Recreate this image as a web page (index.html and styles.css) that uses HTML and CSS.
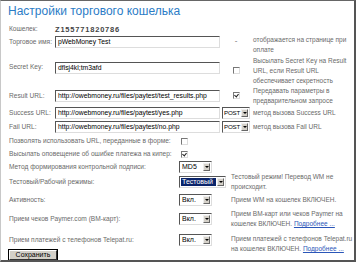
FILE: index.html
```html
<!DOCTYPE html>
<html lang="ru">
<head>
  <meta charset="UTF-8" />
  <title>Настройки торгового кошелька</title>
  <link rel="stylesheet" href="styles.css">
</head>
<body>
<div class="frame">
  <h1>Настройки торгового кошелька</h1>

  <div class="top-grid">
    <div class="lbl">Кошелек:</div>
    <div class="purse">Z155771820786</div>
    <div></div>
    <div></div>

    <div class="lbl t-name">Торговое имя:</div>
    <div class="t-name"><span class="field">pWebMoney Test</span></div>
    <div class="mid t-name">-</div>
    <div class="desc t-top">отображается на странице при<br>оплате</div>

    <div class="lbl t-key">Secret Key:</div>
    <div class="t-key"><span class="field">dflsj4kl;tm3afd</span></div>
    <div class="mid"><span class="cb"></span></div>
    <div class="desc">Высылать Secret Key на Result<br>URL, если Result URL<br>обеспечивает секретность</div>

    <div class="lbl">Result URL:</div>
    <div><span class="field">http://owebmoney.ru/files/paytest/test_results.php</span></div>
    <div class="mid"><span class="cb on"></span></div>
    <div class="desc">Передавать параметры в<br>предварительном запросе</div>

    <div class="lbl">Success URL:</div>
    <div><span class="field">http://owebmoney.ru/files/paytest/yes.php</span></div>
    <div class="mid-sel"><span class="sel w-post"><span class="sel-val">POST</span><span class="sel-btn"></span></span></div>
    <div class="desc">метод вызова Success URL</div>

    <div class="lbl">Fail URL:</div>
    <div><span class="field">http://owebmoney.ru/files/paytest/no.php</span></div>
    <div class="mid-sel"><span class="sel w-post"><span class="sel-val">POST</span><span class="sel-btn"></span></span></div>
    <div class="desc">метод вызова Fail URL</div>
  </div>

  <div class="bottom-grid">
    <div class="lbl">Позволять использовать URL, переданные в форме:</div>
    <div class="ctrl-cb"><span class="cb"></span></div>
    <div></div>

    <div class="lbl">Высылать оповещение об ошибке платежа на кипер:</div>
    <div class="ctrl-cb"><span class="cb on"></span></div>
    <div></div>

    <div class="lbl">Метод формирования контрольной подписи:</div>
    <div><span class="sel w-short"><span class="sel-val">MD5</span><span class="sel-btn"></span></span></div>
    <div></div>

    <div class="lbl">Тестовый/Рабочий режимы:</div>
    <div><span class="sel w-mode"><span class="sel-val picked">Тестовый</span><span class="sel-btn"></span></span></div>
    <div class="desc">Тестовый режим! Перевод WM не<br>происходит.</div>

    <div class="lbl">Активность:</div>
    <div><span class="sel w-short"><span class="sel-val">Вкл.</span><span class="sel-btn"></span></span></div>
    <div class="desc">Прием WM на кошелек ВКЛЮЧЕН.</div>

    <div class="lbl">Прием чеков Paymer.com (ВМ-карт):</div>
    <div><span class="sel w-short"><span class="sel-val">Вкл.</span><span class="sel-btn"></span></span></div>
    <div class="desc">Прием ВМ-карт или чеков Paymer на<br>кошелек ВКЛЮЧЕН. <a href="#">Подробнее ...</a></div>

    <div class="lbl">Прием платежей с телефонов Telepat.ru:</div>
    <div><span class="sel w-short"><span class="sel-val">Вкл.</span><span class="sel-btn"></span></span></div>
    <div class="desc b-last">Прием платежей с телефонов Telepat.ru<br>на кошелек ВКЛЮЧЕН. <a href="#">Подробнее ...</a></div>
  </div>

  <button class="save" type="button">Сохранить</button>
</div>
</body>
</html>
```

FILE: styles.css
```css
body {
  margin: 0;
  background: #fff;
  font-family: "Liberation Sans", Arial, sans-serif;
  color: #6a6a6a;
}
.frame {
  width: 353px;
  height: 259px;
  border-top: 1px solid #666;
  border-left: 1px solid #c8c8c8;
  border-right: 2px solid #555;
  border-bottom: 2px solid #555;
  overflow: hidden;
}
h1 {
  margin: 0;
  padding: 2px 0 0 7px;
  font-size: 12px;
  line-height: 16px;
  font-weight: normal;
  color: #2b7cc6;
}
.lbl {
  font-size: 6.6px;
  line-height: 10px;
  white-space: nowrap;
}
.desc {
  font-size: 6.5px;
  line-height: 10px;
  white-space: nowrap;
}
.desc a {
  color: #2a56b8;
}
.top-grid {
  display: grid;
  grid-template-columns: 46px 165px 33px 98px;
  grid-template-rows: 12px 21px 30px 20px 14px 13px;
  margin: 4px 0 0 8px;
  align-items: center;
}
.t-name { align-self: start; margin-top: 1px; }
.lbl.t-name { margin-top: 2px; }
.t-top { align-self: start; }
.t-key { align-self: start; margin-top: 6px; }
.lbl.t-key { margin-top: 6px; }
.purse {
  font-size: 7.5px;
  color: #444;
  font-weight: bold;
  letter-spacing: 0.8px;
}
.field {
  display: block;
  width: 161px;
  height: 10px;
  border-top: 1px solid #555;
  border-left: 1px solid #555;
  border-right: 1px solid #ddd;
  border-bottom: 1px solid #ddd;
  font-size: 6.8px;
  line-height: 10px;
  padding-left: 2px;
  color: #000;
  white-space: nowrap;
  overflow: hidden;
}
.mid {
  text-align: center;
  font-size: 8px;
  line-height: 10px;
  padding-right: 1px;
}
.mid-sel {
  padding-left: 2px;
}
.cb {
  display: inline-block;
  width: 5px;
  height: 5px;
  border-top: 1px solid #777;
  border-left: 1px solid #777;
  border-right: 1px solid #ddd;
  border-bottom: 1px solid #ddd;
  background: #fff;
  position: relative;
  vertical-align: middle;
}
.cb.on::after {
  content: "";
  position: absolute;
  left: 1px;
  top: 0;
  width: 2px;
  height: 3px;
  border-right: 1px solid #222;
  border-bottom: 1px solid #222;
  transform: rotate(40deg);
}
.sel {
  display: flex;
  align-items: center;
  height: 10px;
  border-top: 1px solid #555;
  border-left: 1px solid #555;
  border-right: 1px solid #ddd;
  border-bottom: 1px solid #ddd;
  background: #fff;
  padding: 0 1px;
}
.sel-val {
  flex: 1;
  font-size: 7px;
  line-height: 8px;
  color: #000;
  padding-left: 1px;
  white-space: nowrap;
  overflow: hidden;
}
.w-post .sel-val {
  font-size: 6.2px;
  letter-spacing: -0.2px;
  padding-left: 0;
}
.sel-val.picked {
  background: #0a246a;
  color: #fff;
  margin-right: 1px;
}
.sel-btn {
  flex: none;
  width: 7px;
  height: 8px;
  background: #d4d0c8;
  border-top: 1px solid #eee;
  border-left: 1px solid #eee;
  border-right: 1px solid #666;
  border-bottom: 1px solid #666;
  box-sizing: border-box;
  position: relative;
}
.sel-btn::after {
  content: "";
  position: absolute;
  left: 1px;
  top: 2px;
  border-left: 2px solid transparent;
  border-right: 2px solid transparent;
  border-top: 2px solid #000;
}
.w-post { width: 24px; }
.w-short { width: 29px; }
.w-mode { width: 43px; }
.bottom-grid {
  display: grid;
  grid-template-columns: 170px 52px 120px;
  grid-template-rows: 13px 13px 13px 17px 20px 18px 24px;
  margin: 1px 0 0 8px;
  align-items: center;
}
.ctrl-cb { padding-left: 2px; }
.b-last { align-self: start; margin-top: 6px; }
.save {
  display: block;
  margin: -2px 0 0 8px;
  width: 48px;
  height: 10px;
  padding: 0;
  background: #d4d0c8;
  border-top: 1px solid #fff;
  border-left: 1px solid #fff;
  border-right: 1px solid #333;
  border-bottom: 1px solid #333;
  box-shadow: 0 0 0 1px #000;
  font-family: "Liberation Sans", Arial, sans-serif;
  font-size: 7px;
  line-height: 8px;
  color: #000;
}
```
